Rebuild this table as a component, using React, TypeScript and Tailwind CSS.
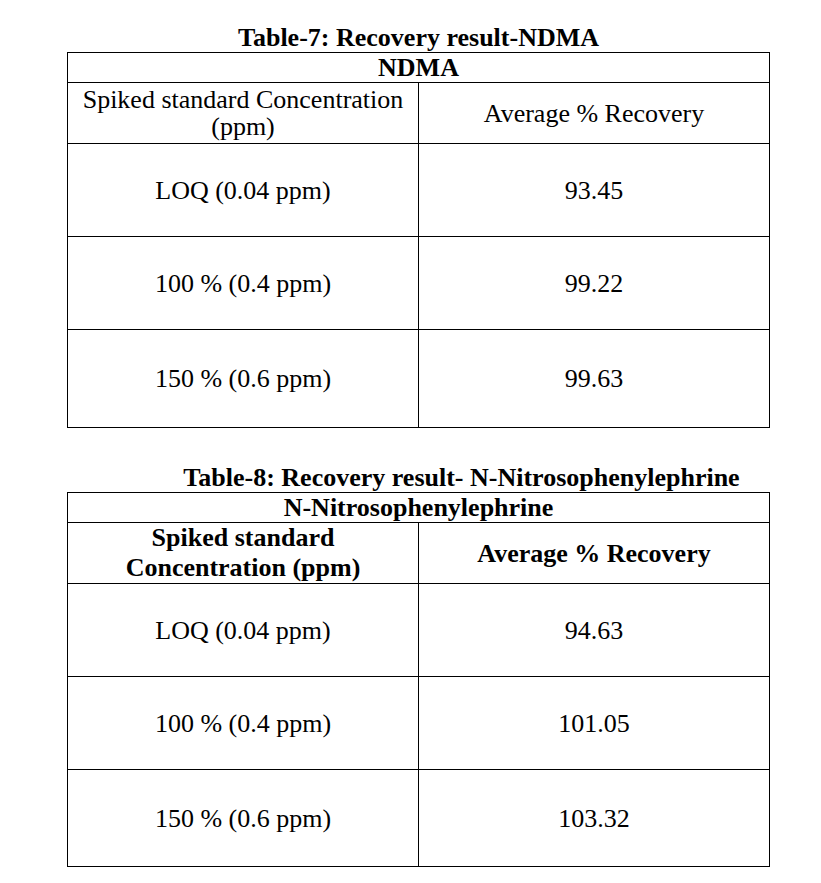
const tables = [
  {
    title: "Table-7: Recovery result-NDMA",
    titleClass: "pl-0",
    name: "NDMA",
    boldHead: false,
    headLeft: ["Spiked standard Concentration", "(ppm)"],
    rows: [
      ["LOQ (0.04 ppm)", "93.45", "h-[93px]"],
      ["100 % (0.4 ppm)", "99.22", "h-[93px]"],
      ["150 % (0.6 ppm)", "99.63", "h-[98px]"],
    ],
  },
  {
    title: "Table-8: Recovery result- N-Nitrosophenylephrine",
    titleClass: "pl-[86px]",
    name: "N-Nitrosophenylephrine",
    boldHead: true,
    headLeft: ["Spiked standard", "Concentration (ppm)"],
    rows: [
      ["LOQ (0.04 ppm)", "94.63", "h-[93px]"],
      ["100 % (0.4 ppm)", "101.05", "h-[93px]"],
      ["150 % (0.6 ppm)", "103.32", "h-[97px]"],
    ],
  },
];

export default function App() {
  return (
    <div className="w-[821px] h-[883px] bg-white text-black font-['Liberation_Serif',serif] pl-[67px] pt-[24px]">
      {tables.map((t, i) => (
        <div key={i} className={i === 0 ? "" : "mt-[36px]"}>
          <h2 className={`w-[703px] h-[28px] text-center text-[26px] leading-[28px] font-bold ${t.titleClass}`}>
            {t.title}
          </h2>
          <table className="w-[703px] border-collapse table-fixed text-[26px]">
            <tbody>
              <tr className="h-[30px]">
                <td colSpan={2} className="border-[1.5px] border-black text-center font-bold leading-[26px] p-0">
                  {t.name}
                </td>
              </tr>
              <tr className="h-[61px]">
                <td className={`w-[352px] border-[1.5px] border-black text-center p-0 ${t.boldHead ? "font-bold leading-[30px]" : "leading-[27px]"}`}>
                  {t.headLeft[0]}
                  <br />
                  {t.headLeft[1]}
                </td>
                <td className={`border-[1.5px] border-black text-center p-0 ${t.boldHead ? "font-bold" : ""}`}>
                  Average % Recovery
                </td>
              </tr>
              {t.rows.map(([a, b, h]) => (
                <tr key={a} className={h}>
                  <td className="border-[1.5px] border-black text-center p-0">{a}</td>
                  <td className="border-[1.5px] border-black text-center p-0">{b}</td>
                </tr>
              ))}
            </tbody>
          </table>
        </div>
      ))}
    </div>
  );
}
